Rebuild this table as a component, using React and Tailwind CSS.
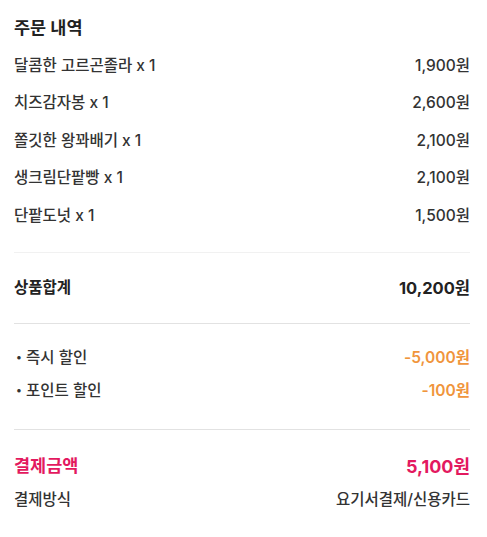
const items = [
  { name: "달콤한 고르곤졸라 x 1", price: "1,900원" },
  { name: "치즈감자봉 x 1", price: "2,600원" },
  { name: "쫄깃한 왕꽈배기 x 1", price: "2,100원" },
  { name: "생크림단팥빵 x 1", price: "2,100원" },
  { name: "단팥도넛 x 1", price: "1,500원" },
];

const discounts = [
  { name: "즉시 할인", price: "-5,000원" },
  { name: "포인트 할인", price: "-100원" },
];

export default function App() {
  return (
    <div
      className="min-h-screen bg-white pl-[14px] pr-[17px] pt-[16px] text-[#333]"
      style={{ fontFamily: 'Inter, "Noto Sans CJK KR", sans-serif' }}
    >
      <h2 className="text-[17.5px] font-bold leading-[24px] text-[#222]">주문 내역</h2>

      <ul className="mt-[6.5px] pb-[18px]">
        {items.map((item) => (
          <li key={item.name} className="flex h-[37.5px] items-center justify-between text-[15.5px] font-medium">
            <span>{item.name}</span>
            <span>{item.price}</span>
          </li>
        ))}
      </ul>

      <div className="border-t border-[#f1f1f1]" />

      <div className="flex h-[70px] items-center justify-between text-[15.5px]">
        <span className="font-bold text-[#222]">상품합계</span>
        <span className="text-[16.5px] font-bold text-[#222]">10,200원</span>
      </div>

      <div className="border-t border-[#e2e2e2]" />

      <ul className="pt-[17px] pb-[22px]">
        {discounts.map((d) => (
          <li key={d.name} className="flex h-[33px] items-center justify-between text-[15.5px] font-medium">
            <span className="flex items-center">
              <span className="w-[12px] pl-[2px] text-[11px]">•</span>
              {d.name}
            </span>
            <span className="font-semibold text-[#f0953c]">{d.price}</span>
          </li>
        ))}
      </ul>

      <div className="border-t border-[#e2e2e2]" />

      <div className="pt-[19px] pb-[20px]">
        <div className="flex h-[34px] items-center justify-between font-bold text-[#e3195f]">
          <span className="text-[17.5px]">결제금액</span>
          <span className="text-[18px]">5,100원</span>
        </div>
        <div className="flex h-[34px] items-center justify-between text-[15.5px] font-medium">
          <span>결제방식</span>
          <span>요기서결제/신용카드</span>
        </div>
      </div>

      <div className="border-t border-[#e2e2e2]" />
    </div>
  );
}
